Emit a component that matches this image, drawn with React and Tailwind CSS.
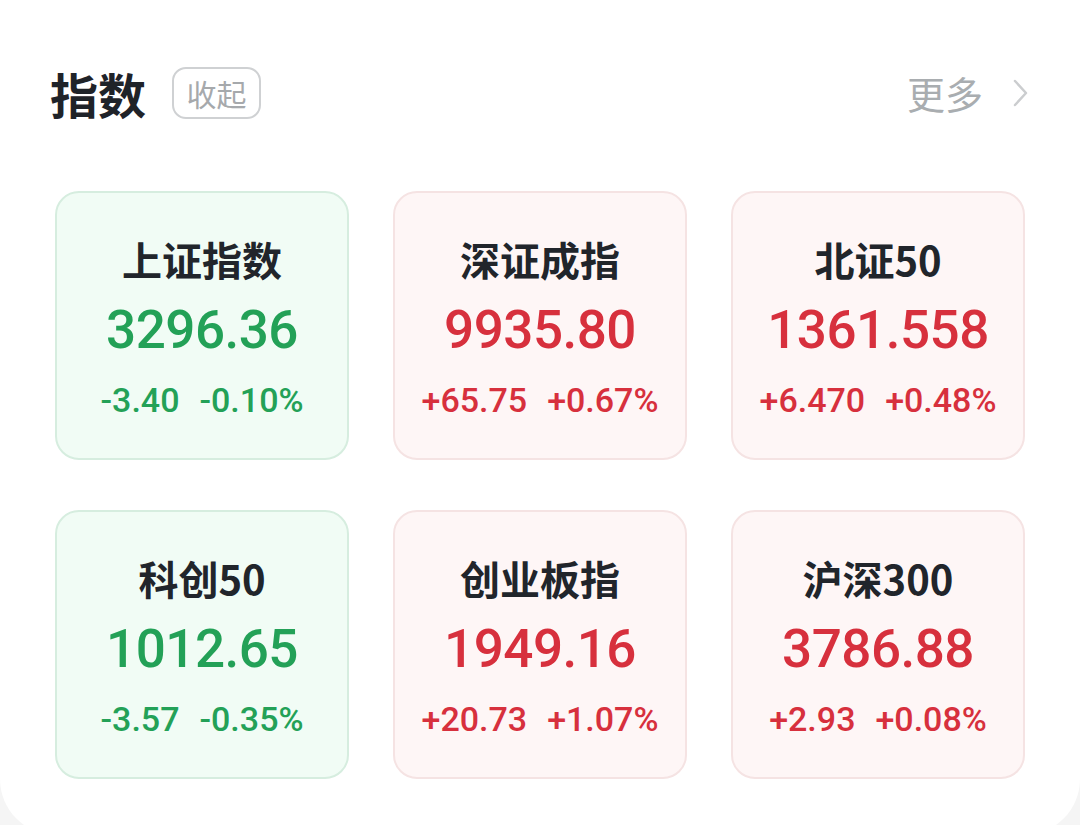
import React from "react";

const indices = [
  { name: "上证指数", value: "3296.36", change: "-3.40", pct: "-0.10%", up: false },
  { name: "深证成指", value: "9935.80", change: "+65.75", pct: "+0.67%", up: true },
  { name: "北证50", value: "1361.558", change: "+6.470", pct: "+0.48%", up: true },
  { name: "科创50", value: "1012.65", change: "-3.57", pct: "-0.35%", up: false },
  { name: "创业板指", value: "1949.16", change: "+20.73", pct: "+1.07%", up: true },
  { name: "沪深300", value: "3786.88", change: "+2.93", pct: "+0.08%", up: true },
];

const cjk = "font-['Noto_Sans_CJK_SC','Noto_Sans',sans-serif]";
const num = "font-['Roboto','Noto_Sans_CJK_SC',sans-serif]";

function IndexCard({ item }) {
  const box = item.up
    ? "bg-[#fef6f6] border-[#f5e3e3]"
    : "bg-[#f1fcf5] border-[#d6eddf]";
  const color = item.up ? "text-[#d7303d]" : "text-[#23a157]";
  return (
    <div className={`h-[269px] rounded-[24px] border-2 ${box} flex flex-col items-center pt-[46px]`}>
      <div className={`${cjk} text-[40px] leading-none font-semibold text-[#21252b]`}>
        {item.name}
      </div>
      <div className={`${num} ${color} mt-[25px] text-[53px] leading-none font-medium tracking-[-0.5px]`}>
        {item.value}
      </div>
      <div className={`${num} ${color} mt-[26px] text-[34px] leading-none font-medium flex gap-[20px]`}>
        <span>{item.change}</span>
        <span>{item.pct}</span>
      </div>
    </div>
  );
}

export default function App() {
  return (
    <div className="w-[1080px] h-[825px] bg-[#f5f5f5] overflow-hidden">
      <div className="h-[835px] bg-white rounded-b-[56px] px-[55px] pt-[67px]">
        <div className="flex items-center h-[52px]">
          <div className={`${cjk} -ml-[5px] text-[48px] leading-none font-bold text-[#1f2329]`}>
            指数
          </div>
          <div className={`${cjk} ml-[26px] h-[52px] w-[89px] rounded-[14px] border-2 border-[#cfd1d3] flex items-center justify-center text-[30px] leading-none text-[#a6a9ac]`}>
            收起
          </div>
          <div className="ml-auto flex items-center">
            <span className={`${cjk} text-[38px] leading-none text-[#a9adb0]`}>更多</span>
            <svg className="ml-[28px] mr-[-6px]" width="20" height="30" viewBox="0 0 20 30" fill="none">
              <path d="M4 3 L15 15 L4 27" stroke="#cbcdcf" strokeWidth="2.5" strokeLinecap="round" strokeLinejoin="round" />
            </svg>
          </div>
        </div>
        <div className="mt-[72px] grid grid-cols-3 gap-x-[44px] gap-y-[50px]">
          {indices.map((item) => (
            <IndexCard key={item.name} item={item} />
          ))}
        </div>
      </div>
    </div>
  );
}
